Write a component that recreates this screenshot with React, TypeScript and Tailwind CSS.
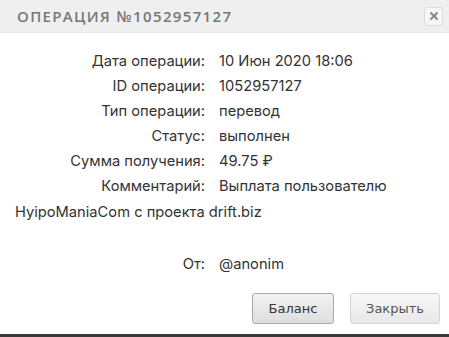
import { X } from "lucide-react";

const rows: [string, string][] = [
  ["Дата операции:", "10 Июн 2020 18:06"],
  ["ID операции:", "1052957127"],
  ["Тип операции:", "перевод"],
  ["Статус:", "выполнен"],
  ["Сумма получения:", "49.75 ₽"],
];

function Row({ label, value }: { label: string; value: string }) {
  return (
    <div className="flex h-[25px] items-center">
      <span className="w-[204px] shrink-0 pr-[14px] text-right">{label}</span>
      <span>{value}</span>
    </div>
  );
}

export default function App() {
  return (
    <div className="flex h-[337px] w-[449px] flex-col bg-white font-['Inter',sans-serif] text-[#333]">
      {/* header */}
      <div className="flex h-[33px] shrink-0 items-center justify-between border-b border-[#e6e6e6] bg-[#efefef] pl-[17px] pr-[6px] font-['Open_Sans',sans-serif]">
        <h1 className="text-[15px] font-semibold uppercase tracking-[0.09em] text-[#777]">
          Операция №1052957127
        </h1>
        <button
          type="button"
          className="flex size-[19px] items-center justify-center rounded-[3px] border border-[#dcdcdc] bg-[#f6f6f6] text-[#888]"
          aria-label="Close"
        >
          <X className="size-3" strokeWidth={4} />
        </button>
      </div>

      {/* details */}
      <div className="flex-1 pl-[15px] pt-[15px] text-[14.7px] leading-[18px]">
        {rows.map(([l, v]) => (
          <Row key={l} label={l} value={v} />
        ))}
        <Row label="Комментарий:" value="Выплата пользователю" />
        <div className="flex h-[27px] items-center">HyipoManiaCom с проекта drift.biz</div>
        <div className="h-[26px]" />
        <Row label="От:" value="@anonim" />
      </div>

      {/* footer */}
      <div className="flex justify-end gap-[16px] pb-[10px] pr-[9px] font-['DejaVu_Sans',sans-serif] text-[13px]">
        <button
          type="button"
          className="h-[31px] w-[82px] rounded-[3px] border border-[#a9a9a9] bg-gradient-to-b from-[#f2f2f2] to-[#dedede] text-[#333]"
        >
          Баланс
        </button>
        <button
          type="button"
          className="h-[31px] w-[90px] rounded-[3px] border border-[#d4d4d4] bg-gradient-to-b from-[#f7f7f7] to-[#e8e8e8] text-[#555]"
        >
          Закрыть
        </button>
      </div>
      <div className="h-[3px] shrink-0 bg-[#3a3a3a]" />
    </div>
  );
}
